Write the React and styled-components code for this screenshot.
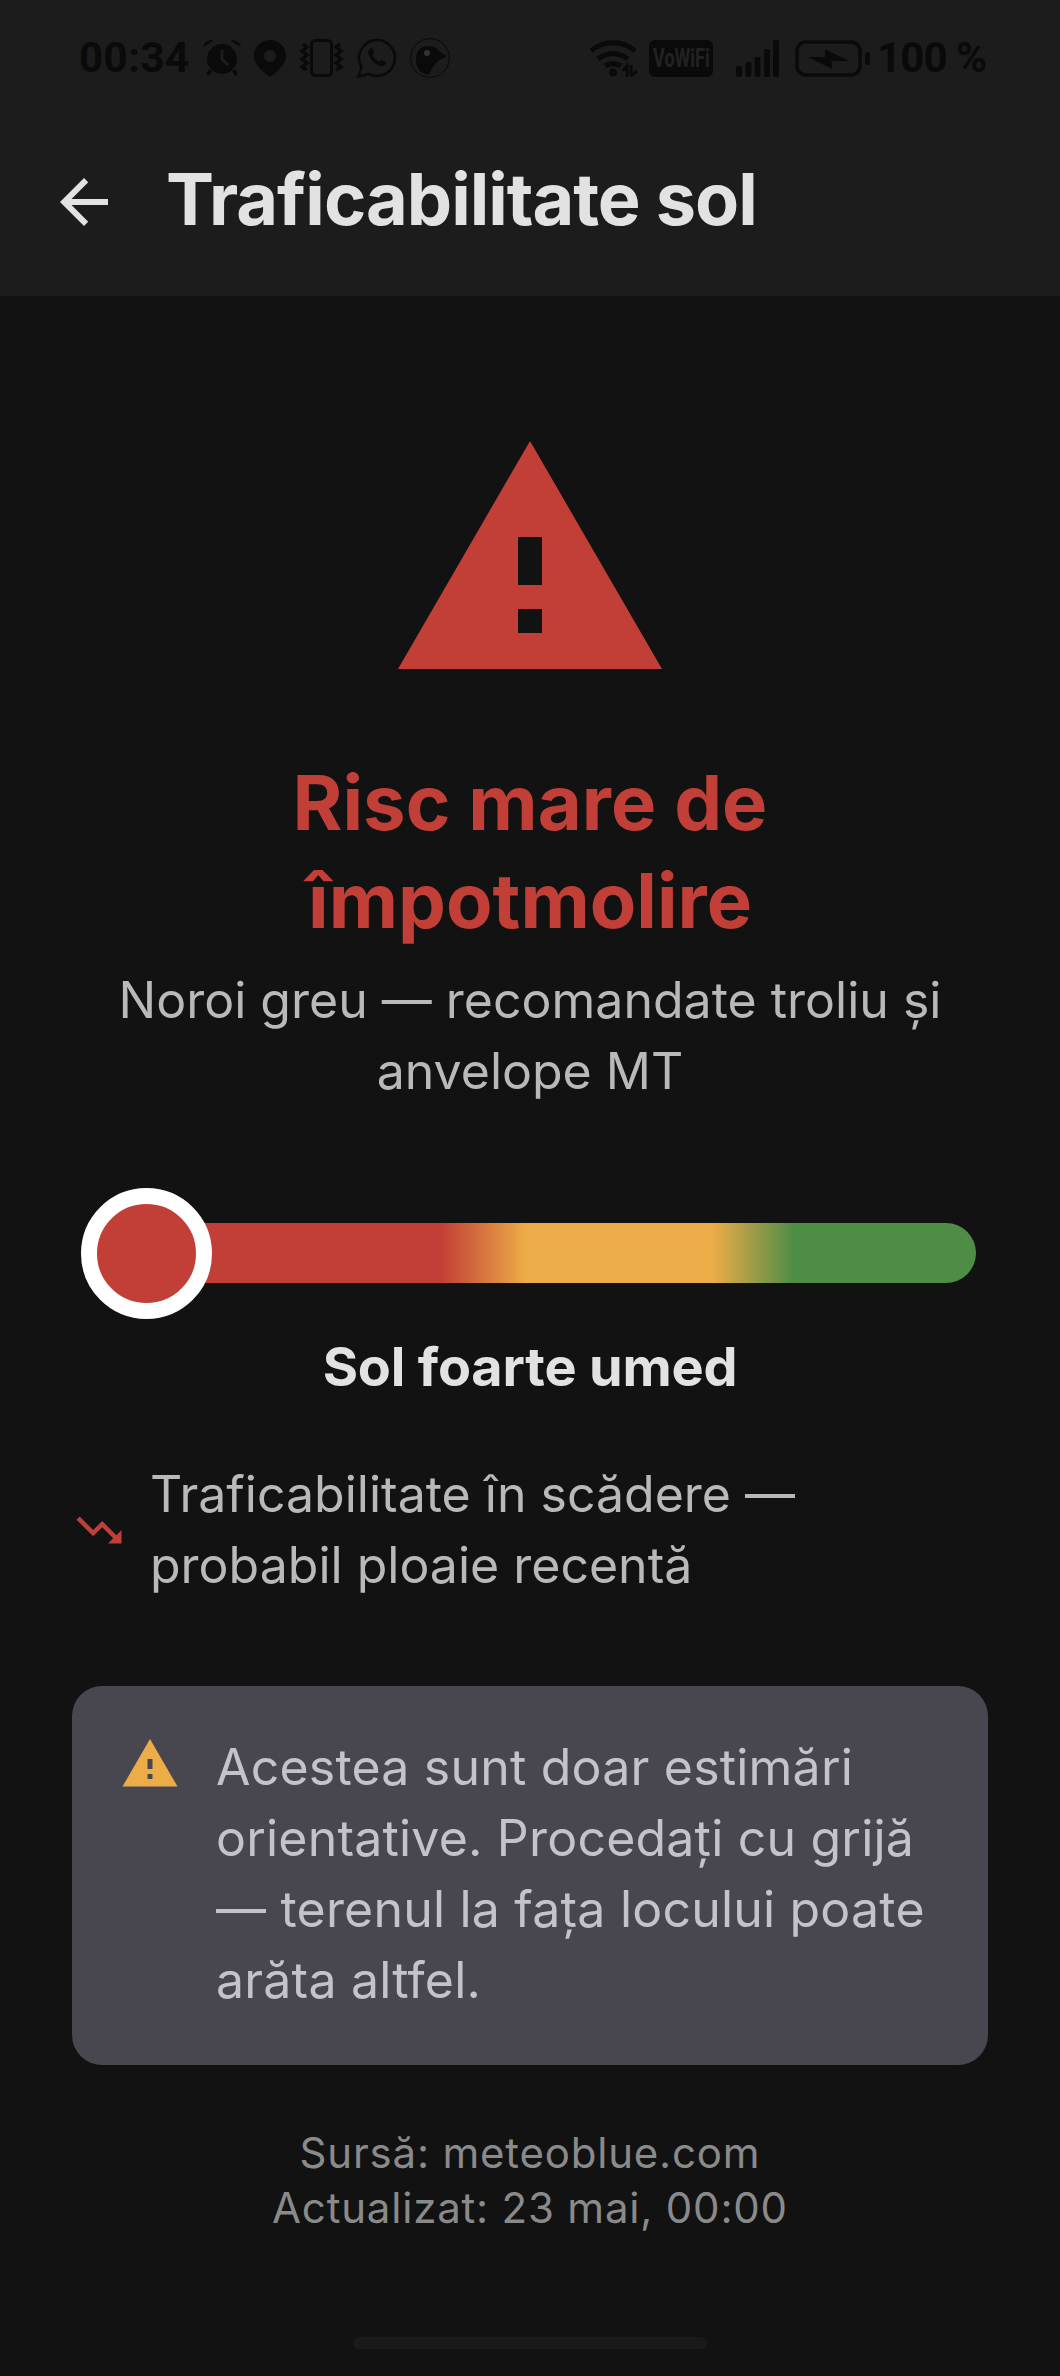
import React from "react";
import styled, { createGlobalStyle } from "styled-components";

const INK = "#0a0a0a";

const Global = createGlobalStyle`
  html, body { margin: 0; padding: 0; background: #121212; }
  * { box-sizing: border-box; }
  #root { width: 1060px; height: 2376px; overflow: hidden; }
`;

const Page = styled.div`
  width: 1060px; height: 2376px; background: #121212; display: flex; flex-direction: column;
  font-family: "Inter", "Open Sans", sans-serif; font-variant-ligatures: none; position: relative;
`;
const Header = styled.header`
  height: 296px; background: #1c1c1c; display: flex; flex-direction: column; flex: none;
`;
const StatusBar = styled.div`
  height: 116px; padding: 0 74px 0 79px; display: flex; align-items: center; justify-content: space-between; color: ${INK};
`;
const StatusGroup = styled.div`
  display: flex; align-items: center; gap: ${p => p.$gap || 0}px;
`;
const StatusSlot = styled.span`
  display: flex; margin-left: ${p => p.$ml || 0}px;
`;
const StatusText = styled.span`
  font-family: "Roboto", sans-serif; font-weight: 700; font-size: 42px; line-height: 1; letter-spacing: ${p => p.$ls || 0}px;
`;
const Toolbar = styled.div`
  display: flex; align-items: center; height: 72px; padding: 0 0 0 48px; gap: 46px; margin-top: 50px;
`;
const Title = styled.h1`
  margin: -7px 0 0; font-size: 72px; font-weight: 700; color: #e2e2e2; line-height: 1; letter-spacing: -1px;
`;
const Main = styled.main`
  flex: 1; padding: 121px 72px 0; display: flex; flex-direction: column; align-items: center; position: relative;
`;
const HeroTitle = styled.h2`
  margin: 48px 0 0; font-size: 76px; font-weight: 700; line-height: 98px; color: #c13f36; text-align: center; width: 640px;
`;
const Subtitle = styled.p`
  margin: 16px 0 0; font-size: 50px; line-height: 71px; color: #b9b9b9; text-align: center; width: 880px;
`;
const Gauge = styled.div`
  position: relative; align-self: stretch; height: 60px; margin: 116px 12px 0; border-radius: 30px;
  background: linear-gradient(90deg, #c13f36 0%, #c13f36 40%, #ecac47 49.500%, #ecac47 70.500%, #4f8d47 79.500%, #4f8d47 100%);
`;
const Thumb = styled.div`
  position: absolute; left: -3px; top: -35px; width: 131px; height: 131px; border-radius: 50%;
  background: #c13f36; border: 16.500px solid #fff;
`;
const GaugeLabel = styled.div`
  margin-top: 52px; font-size: 54px; font-weight: 700; color: #e2e2e2; line-height: 64px; text-align: center; letter-spacing: -0.200px;
`;
const Trend = styled.div`
  align-self: stretch; display: flex; align-items: center; margin-top: 60px; gap: 24px;
`;
const TrendText = styled.div`
  font-size: 50px; line-height: 71px; color: #b9b9b9; width: 720px;
`;
const Notice = styled.section`
  align-self: stretch; margin-top: 85px; background: #48464f; border-radius: 30px; padding: 46px 48px 0;
  display: flex; gap: 36px; height: 379px;
`;
const NoticeIcon = styled.span`
  display: flex; flex: none; padding-top: 2px;
`;
const NoticeText = styled.div`
  font-size: 50px; line-height: 71px; color: #c5c2ca; letter-spacing: 0.200px;
`;
const Source = styled.footer`
  margin-top: 60px; font-size: 42px; line-height: 55px; color: #8a8a8a; text-align: center; letter-spacing: 0.800px;
`;
const HomeBar = styled.div`
  position: absolute; left: 353px; top: 2337px; width: 354px; height: 12px; border-radius: 6px; background: #1a1a1a;
`;
const VoWifi = styled.span`
  width: 64px; height: 37px; background: ${INK}; border-radius: 6px; color: #222; font-family: "Roboto", sans-serif;
  font-weight: 700; font-size: 25px; display: flex; align-items: center; justify-content: center; overflow: hidden;
`;
const VoWifiLabel = styled.span`
  display: block; transform: scaleX(0.72); white-space: nowrap;
`;

const Warn = ({ size, color }) => (
  <svg width={size} height={size} viewBox="0 0 24 24" style={{ flex: "none", display: "block" }}>
    <path fill={color} fillRule="evenodd" d="M1 21h22L12 2 1 21zm12-3h-2v-2h2v2zm0-4h-2v-4h2v4z" />
  </svg>
);
const Alarm = () => (
  <svg width="38" height="38" viewBox="0 0 38 38"><path fill={INK} fillRule="evenodd" d="M19 5a15 15 0 1 0 0 30 15 15 0 0 0 0-30zm-1.500 6h3v9l6 5-2 2.200-7-6zM9 1C4 1 1 4 0 8l10-6zM29 1c5 0 8 3 9 7L28 2zM6 30l3 2-3 5-3-2zM32 30l-3 2 3 5 3-2z"/></svg>
);
const Pin = () => (
  <svg width="32" height="37" viewBox="0 0 32 37"><path fill={INK} fillRule="evenodd" d="M16 0C7 0 0 7 0 16c0 8 7 14 16 21 9-7 16-13 16-21C32 7 25 0 16 0zm0 10a6 6 0 1 1 0 12 6 6 0 0 1 0-12z"/></svg>
);
const Vibrate = () => (
  <svg width="45" height="38" viewBox="0 0 45 38" fill="none" stroke={INK}><rect x="12.500" y="1.500" width="20" height="35" rx="4" strokeWidth="3"/><path d="M4 5l4 3-5 4 5 4-5 4 5 4-5 4 5 3M41 5l-4 3 5 4-5 4 5 4-5 4 5 4-5 3" strokeWidth="3.500"/></svg>
);
const Whatsapp = () => (
  <svg width="40" height="40" viewBox="0 0 40 40"><path fill="none" stroke={INK} strokeWidth="2.500" d="M20 2a18 18 0 0 1 0 36c-3 0-6-.8-8.500-2L1.500 38.500 4.500 29A18 18 0 0 1 20 2z"/><path fill={INK} d="M14 10c-2 1-3 3-2.500 5.500 1 5 6 11 12 12.500 2.500.5 4.500-.5 5.500-2.500.3-.7.200-1.200-.3-1.500l-3.700-2c-.6-.3-1-.1-1.400.3l-1.100 1.400c-3-1-6-4-7-7l1.300-1.200c.4-.4.500-.8.300-1.300l-1.600-3.700c-.3-.6-.8-.8-1.500-.5z"/></svg>
);
const Bird = () => (
  <svg width="40" height="40" viewBox="0 0 40 40"><circle cx="20" cy="20" r="19.400" fill="none" stroke={INK} strokeWidth="1"/><path fill={INK} d="M6 20c0-7 5-12 12-12 6 0 9 2 12 6l6 4c-2 3-5 3-8 5-3 3-7 7-8 13-3 1-6 0-9-2-4-4-5-8-5-14z"/><circle cx="17" cy="15" r="3" fill="#333"/></svg>
);
const Wifi = () => (
  <svg width="48" height="37" viewBox="0 0 48 37" fill="none" stroke={INK} strokeWidth="5"><path d="M1 11C13 0 33 0 45 11M8 19c9-7 21-7 30 0M15 26c5-3 11-3 16 0"/><circle cx="23" cy="32.500" r="4" fill={INK} stroke="none"/><path d="M37 37V26l-4.500 5" strokeWidth="3"/><path d="M41 36V25M41 36l6-5" strokeWidth="3"/></svg>
);
const Signal = () => (
  <svg width="43" height="37" viewBox="0 0 43 37" fill={INK}><rect x="0" y="26" width="6" height="11" rx="2"/><rect x="9.500" y="22" width="6" height="15" rx="2"/><rect x="18.500" y="17" width="6" height="20" rx="2"/><rect x="28" y="9" width="6" height="28" rx="2"/><rect x="37" y="0" width="6" height="37" rx="2"/></svg>
);
const Battery = () => (
  <svg width="75" height="37" viewBox="0 0 75 37"><rect x="2" y="2" width="63" height="33" rx="9" fill="none" stroke={INK} strokeWidth="3.500"/><path fill={INK} d="M13 17l17-0 0-8 24 12-17 0 0 8z"/><rect x="70" y="12" width="5" height="13" rx="2.500" fill={INK}/></svg>
);
const Back = () => (
  <svg width="72" height="72" viewBox="0 0 24 24" style={{ display: "block", flex: "none" }}><path fill="#e2e2e2" d="M20 11H7.830l5.590-5.590L12 4l-8 8 8 8 1.410-1.410L7.830 13H20v-2z"/></svg>
);
const TrendIcon = () => (
  <svg width="54" height="54" viewBox="0 0 24 24" style={{ flex: "none" }}><path fill="#c13f36" d="M16 18l2.290-2.290-4.880-4.880-4 4L2 7.410 3.410 6l6 6 4-4 6.300 6.290L22 12v6z"/></svg>
);

export default function App() {
  return (
    <Page>
      <Global />
      <Header>
        <StatusBar>
          <StatusGroup $gap={13}>
            <StatusText $ls={0.5}>00:34</StatusText>
            <Alarm /><Pin /><Vibrate /><Whatsapp /><Bird />
          </StatusGroup>
          <StatusGroup>
            <Wifi />
            <StatusSlot $ml={11}><VoWifi><VoWifiLabel>VoWiFi</VoWifiLabel></VoWifi></StatusSlot>
            <StatusSlot $ml={23}><Signal /></StatusSlot>
            <StatusSlot $ml={16}><Battery /></StatusSlot>
            <StatusSlot $ml={7}><StatusText $ls={-1}>100 %</StatusText></StatusSlot>
          </StatusGroup>
        </StatusBar>
        <Toolbar>
          <Back />
          <Title>Traficabilitate sol</Title>
        </Toolbar>
      </Header>
      <Main>
        <Warn size={288} color="#c13f36" />
        <HeroTitle>Risc mare de împotmolire</HeroTitle>
        <Subtitle>Noroi greu — recomandate troliu și anvelope MT</Subtitle>
        <Gauge><Thumb /></Gauge>
        <GaugeLabel>Sol foarte umed</GaugeLabel>
        <Trend>
          <TrendIcon />
          <TrendText>Traficabilitate în scădere — probabil ploaie recentă</TrendText>
        </Trend>
        <Notice>
          <NoticeIcon><Warn size={60} color="#ecac47" /></NoticeIcon>
          <NoticeText>Acestea sunt doar estimări orientative. Procedați cu grijă — terenul la fața locului poate arăta altfel.</NoticeText>
        </Notice>
        <Source>Sursă: meteoblue.com<br />Actualizat: 23 mai, 00:00</Source>
      </Main>
      <HomeBar />
    </Page>
  );
}
